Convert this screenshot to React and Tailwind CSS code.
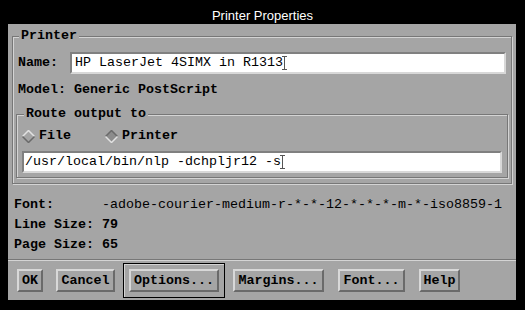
import React from "react";

const mono = "font-['Liberation_Mono',monospace]";

function Cursor() {
  return (
    <svg width="5" height="16" viewBox="0 0 5 16" className="inline-block align-middle -ml-[1px]">
      <path d="M0 1.5H5M2.5 1.5V14.5M0 14.5H5" stroke="#555" strokeWidth="1" fill="none" />
    </svg>
  );
}

function Diamond({ selected }) {
  return (
    <svg width="13" height="13" viewBox="0 0 13 13" className="shrink-0">
      <polygon points="6.5,0.5 12.5,6.5 6.5,12.5 0.5,6.5" fill={selected ? "#8c8c8c" : "#a5a5a5"} />
      <polyline points="0.5,6.5 6.5,0.5 12.5,6.5" fill="none" stroke={selected ? "#6a6a6a" : "#e2e2e2"} strokeWidth="1.5" />
      <polyline points="0.5,6.5 6.5,12.5 12.5,6.5" fill="none" stroke={selected ? "#e2e2e2" : "#6a6a6a"} strokeWidth="1.5" />
    </svg>
  );
}

function Btn({ children, w }) {
  return (
    <div
      className={`${w} h-[23px] flex items-center justify-center border-2 border-t-[#d8d8d8] border-l-[#d8d8d8] border-b-[#6a6a6a] border-r-[#6a6a6a] bg-[#a5a5a5] font-bold leading-[16px] text-black`}
    >
      {children}
    </div>
  );
}

export default function App() {
  const groove =
    "border border-[#777777] shadow-[inset_1px_1px_0_#d4d4d4,1px_1px_0_#d4d4d4]";
  return (
    <div className={`w-[525px] h-[310px] bg-black ${mono} text-[13.33px] text-black overflow-hidden`}>
      <div className="h-[24px] flex justify-center pt-[8px]">
        <span className="font-['Liberation_Sans',sans-serif] text-[13px] leading-[16px] text-white">
          Printer Properties
        </span>
      </div>
      <div className="ml-[8px] w-[508px] h-[276px] bg-[#a5a5a5] flex flex-col pt-[4px]">
        <fieldset className={`mx-[4px] ${groove} px-[3px] pt-[8px] pb-[5px]`}>
          <legend className="ml-[3px] px-[2px] leading-[16px] font-bold bg-[#a5a5a5]">Printer</legend>
          <div className="flex items-center h-[22px] ml-[2px] mr-[2px]">
            <span className="w-[52px] font-bold leading-[16px]">Name:</span>
            <div className="flex-1 h-[22px] bg-white border-2 border-t-[#808080] border-l-[#808080] border-b-[#d8d8d8] border-r-[#d8d8d8] pl-[3px] flex items-center leading-[16px] whitespace-pre">
              HP LaserJet 4SIMX in R1313<Cursor />
            </div>
          </div>
          <div className="mt-[8px] ml-[2px] leading-[16px] font-bold whitespace-pre">Model: Generic PostScript</div>
          <fieldset className={`mt-[8px] ${groove} px-[5px] pt-[6px] pb-[4px]`}>
            <legend className="ml-[2px] px-[2px] leading-[16px] font-bold bg-[#a5a5a5] whitespace-pre">Route output to</legend>
            <div className="flex items-center h-[16px] leading-[16px] font-bold">
              <div className="flex items-center gap-[4px] w-[83px]">
                <Diamond />
                <span>File</span>
              </div>
              <div className="flex items-center gap-[4px]">
                <Diamond selected />
                <span>Printer</span>
              </div>
            </div>
            <div className="mt-[7px] h-[22px] bg-white border-2 border-t-[#808080] border-l-[#808080] border-b-[#d8d8d8] border-r-[#d8d8d8] pl-[1px] flex items-center leading-[16px] whitespace-pre">
              /usr/local/bin/nlp -dchpljr12 -s<Cursor />
            </div>
          </fieldset>
        </fieldset>
        <div className="mt-[11px] px-[6px] flex flex-col leading-[20px] whitespace-pre">
          <div className="flex">
            <span className="w-[88px] font-bold">Font:</span>
            <span>-adobe-courier-medium-r-*-*-12-*-*-*-m-*-iso8859-1</span>
          </div>
          <div className="flex">
            <span className="w-[88px] font-bold">Line Size:</span>
            <span className="font-bold">79</span>
          </div>
          <div className="flex">
            <span className="w-[88px] font-bold">Page Size:</span>
            <span className="font-bold">65</span>
          </div>
        </div>
        <div className="mt-[4px] h-[2px] border-t border-t-[#777777] border-b border-b-[#d4d4d4]" />
        <div className="mt-[2px] flex items-center h-[35px] pl-[9px]">
          <Btn w="w-[26px]">OK</Btn>
          <div className="ml-[13px]">
            <Btn w="w-[59px]">Cancel</Btn>
          </div>
          <div className="ml-[8px] border border-black p-[5px] shadow-[inset_1px_1px_0_#d4d4d4]">
            <Btn w="w-[90px]">Options...</Btn>
          </div>
          <div className="ml-[8px]">
            <Btn w="w-[91px]">Margins...</Btn>
          </div>
          <div className="ml-[14px]">
            <Btn w="w-[67px]">Font...</Btn>
          </div>
          <div className="ml-[14px]">
            <Btn w="w-[41px]">Help</Btn>
          </div>
        </div>
      </div>
    </div>
  );
}
